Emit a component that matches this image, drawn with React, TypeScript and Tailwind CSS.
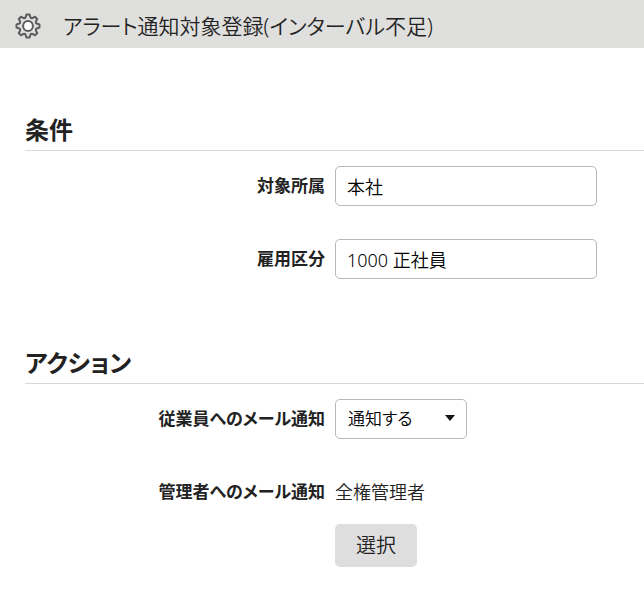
import type { ReactNode } from "react";

const TEETH = [0, 45, 90, 135, 180, 225, 270, 315];

function GearIcon() {
  return (
    <svg
      viewBox="-13 -13 26 26"
      className="size-[26px] shrink-0"
      fill="none"
      stroke="#5c5c5c"
      strokeWidth="2"
      strokeLinecap="round"
      strokeLinejoin="round"
      aria-hidden="true"
    >
      {TEETH.map((angle) => (
        <path
          key={angle}
          transform={`rotate(${angle})`}
          d="M-3.3 -8 Q-2.4 -8.3 -2.2 -9.2 L-1.6 -11.5 H1.6 L2.2 -9.2 Q2.4 -8.3 3.3 -8"
        />
      ))}
      <circle r="4.9" fill="#fff" />
    </svg>
  );
}

function Section({ title, children }: { title: string; children: ReactNode }) {
  return (
    <section>
      <h2 className="border-b border-[#d9d9d9] text-[24px] leading-10 font-bold">{title}</h2>
      <div className="mt-[15px] flex flex-col gap-[33px]">{children}</div>
    </section>
  );
}

function Row({ label, htmlFor, children }: { label: string; htmlFor: string; children: ReactNode }) {
  return (
    <div className="grid grid-cols-[300px_1fr] gap-[10px]">
      <label htmlFor={htmlFor} className="text-right text-[17px] leading-10 font-bold">
        {label}
      </label>
      <div>{children}</div>
    </div>
  );
}

const fieldClass = "block h-10 w-full rounded-[5px] border border-[#b8b8b8] bg-white text-black outline-none";

export default function App() {
  return (
    <div className="min-h-screen bg-white font-['Noto_Sans','Noto_Sans_CJK_JP',sans-serif] text-[18px] font-[350] text-[#222] [font-feature-settings:'palt']">
      <header className="flex h-12 items-center gap-[22px] bg-[#dfdfdd] pt-1 pl-[15px]">
        <GearIcon />
        <h1 className="text-[21px] leading-8 font-[350] whitespace-nowrap">アラート通知対象登録(インターバル不足)</h1>
      </header>

      <main className="flex flex-col gap-16 pt-[62px] pb-8 pl-[25px]">
        <Section title="条件">
          <Row label="対象所属" htmlFor="department">
            <input id="department" type="text" defaultValue="本社" className={`${fieldClass} max-w-[262px] px-[11px]`} />
          </Row>
          <Row label="雇用区分" htmlFor="employment">
            <input
              id="employment"
              type="text"
              defaultValue="1000 正社員"
              className={`${fieldClass} max-w-[262px] px-[11px]`}
            />
          </Row>
        </Section>

        <Section title="アクション">
          <Row label="従業員へのメール通知" htmlFor="employee-mail">
            <div className="relative max-w-[132px]">
              <select id="employee-mail" className={`${fieldClass} appearance-none pr-8 pl-3 text-[17px]`}>
                <option>通知する</option>
                <option>通知しない</option>
              </select>
              <svg viewBox="0 0 10 6" className="pointer-events-none absolute top-4 right-3 h-[6px] w-[10px]" aria-hidden="true">
                <path d="M0 0h10L5 6z" fill="#111" />
              </svg>
            </div>
          </Row>
          <Row label="管理者へのメール通知" htmlFor="manager-select">
            <p className="leading-10">全権管理者</p>
            <button
              id="manager-select"
              type="button"
              className="mt-3 h-[43px] rounded-[5px] bg-[#dedede] px-[21px] text-[20px]"
            >
              選択
            </button>
          </Row>
        </Section>
      </main>
    </div>
  );
}
